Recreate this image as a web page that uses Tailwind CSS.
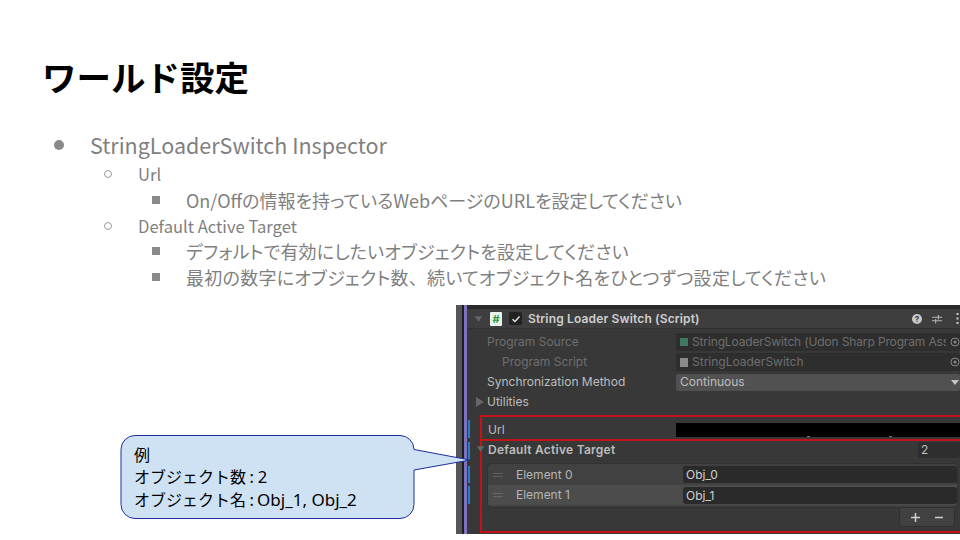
<!DOCTYPE html>
<html lang="ja"><head><meta charset="utf-8">
<script src="https://cdn.jsdelivr.net/npm/@tailwindcss/browser@4"></script>
</head>
<body class="m-0 bg-white">
<div class="relative w-[960px] h-[540px] overflow-hidden bg-white font-['Noto_Sans_CJK_JP','Noto_Sans',sans-serif]">
  <h1 class="absolute left-[42px] top-[52px] m-0 text-[34.5px] leading-[48px] font-bold text-black">ワールド設定</h1>
  <ul class="absolute left-[54px] top-[130px] w-[880px] m-0 p-0 list-none text-[#7f7f7f]">
    <li class="flex items-center h-[30px]"><span class="w-[10px] h-[10px] rounded-full bg-[#8a8a8a] mr-[26px]"></span><span class="text-[21.5px]">StringLoaderSwitch Inspector</span></li>
    <li class="flex items-center h-[28px] pl-[50px] text-[16.6px]"><span class="w-[8px] h-[8px] rounded-full border border-[#999] mr-[26px]"></span><span>Url</span></li>
    <li class="flex items-center h-[24px] pl-[98px] text-[18px] [font-feature-settings:'palt']"><span class="w-[8px] h-[8px] bg-[#8a8a8a] mr-[26px]"></span><span>On/Offの情報を持っているWebページのURLを設定してください</span></li>
    <li class="flex items-center h-[28px] pl-[50px] text-[16.6px]"><span class="w-[8px] h-[8px] rounded-full border border-[#999] mr-[26px]"></span><span>Default Active Target</span></li>
    <li class="flex items-center h-[22px] pl-[98px] text-[18px] tracking-[0.19px] [font-feature-settings:'palt']"><span class="w-[8px] h-[8px] bg-[#8a8a8a] mr-[26px]"></span><span>デフォルトで有効にしたいオブジェクトを設定してください</span></li>
    <li class="flex items-center h-[30px] pl-[98px] text-[18px] tracking-[0.26px] [font-feature-settings:'palt']"><span class="w-[8px] h-[8px] bg-[#8a8a8a] mr-[26px]"></span><span>最初の数字にオブジェクト数<span class="[font-feature-settings:normal]">、</span>続いてオブジェクト名をひとつずつ設定してください</span></li>
  </ul>

  <!-- inspector picture -->
  <div class="absolute left-[456px] top-[305px] w-[504px] h-[229px] flex bg-[#383838] font-['Inter',sans-serif] text-[12px] leading-[20px] text-[#bdbdbd] overflow-hidden">
    <div class="w-[6px] bg-[#55555a]"></div>
    <div class="w-[2px] bg-[#1e1e1e]"></div>
    <div class="w-[3px] bg-[#7d72c0]"></div>
    <div class="flex-1 min-w-0 flex flex-col relative">
      <div class="h-[24px] shrink-0 flex items-center bg-[#3e3e3e] border-t-[4px] border-[#2a2a2a] border-b border-b-[#303030]">
        <svg class="ml-[7px] w-[9px] h-[8px]" viewBox="0 0 11 9"><path d="M1 1h9L5.500 8z" fill="#666"/></svg>
        <span class="ml-[7px] w-[12px] h-[14px] bg-[#e8f2ea] text-[#2f9a50] text-[11px] leading-[14px] font-bold text-center rounded-[1px]">#</span>
        <span class="ml-[7px] w-[13px] h-[13px] bg-[#222] rounded-[2px] flex items-center justify-center"><svg class="w-[10px] h-[10px]" viewBox="0 0 10 10"><path d="M1.500 5.200 4 7.500 8.500 2.500" stroke="#e0e0e0" stroke-width="1.500" fill="none"/></svg></span>
        <span class="ml-[6px] font-semibold text-[12px] text-[#cfcfcf] tracking-[0.15px]">String Loader Switch (Script)</span>
        <div class="ml-auto flex items-center">
          <span class="w-[10px] h-[10px] rounded-full bg-[#c8c8c8] text-[#333] text-[8px] leading-[10px] font-bold text-center">?</span>
          <svg class="ml-[10px] w-[10px] h-[10px]" viewBox="0 0 11 11"><path d="M0 3.500h11M0 7.500h11M7 1v5M4 5.500v5" stroke="#b5b5b5" stroke-width="1.200" fill="none"/></svg>
          <svg class="ml-[14px] mr-[1px] w-[3px] h-[11px]" viewBox="0 0 3 11"><path d="M0.500 0h2v2h-2zM0.500 4.500h2v2h-2zM0.500 9h2v2h-2z" fill="#ccc"/></svg>
        </div>
      </div>
      <div class="mt-[3px] h-[20px] shrink-0 flex items-center text-[#6e6e6e]">
        <span class="pl-[20px] w-[209px] shrink-0">Program Source</span>
        <div class="flex-1 min-w-0 h-[18px] flex items-center bg-[#2e2e2e] rounded-[2px] pl-[4px] overflow-hidden">
          <span class="w-[8px] h-[8px] bg-[#3f7a5f] shrink-0"></span><span class="ml-[4px] whitespace-nowrap overflow-hidden w-[255px] tracking-[-0.14px]">StringLoaderSwitch (Udon Sharp Program Ass</span><svg class="ml-[4px] w-[10px] h-[10px] shrink-0" viewBox="0 0 10 10"><circle cx="5" cy="5" r="4" fill="none" stroke="#888"/><circle cx="5" cy="5" r="1.500" fill="#888"/></svg>
        </div>
      </div>
      <div class="h-[20px] shrink-0 flex items-center text-[#6e6e6e]">
        <span class="pl-[35px] w-[209px] shrink-0">Program Script</span>
        <div class="flex-1 min-w-0 h-[18px] flex items-center bg-[#2e2e2e] rounded-[2px] pl-[4px] overflow-hidden">
          <span class="w-[8px] h-[9px] bg-[#8a8a8a] shrink-0"></span><span class="ml-[4px] whitespace-nowrap w-[255px]">StringLoaderSwitch</span><svg class="ml-[4px] w-[10px] h-[10px] shrink-0" viewBox="0 0 10 10"><circle cx="5" cy="5" r="4" fill="none" stroke="#888"/><circle cx="5" cy="5" r="1.500" fill="#888"/></svg>
        </div>
      </div>
      <div class="h-[20px] shrink-0 flex items-center">
        <span class="pl-[20px] w-[209px] shrink-0">Synchronization Method</span>
        <div class="flex-1 min-w-0 h-[17px] flex items-center justify-between bg-[#515151] rounded-[2px] pl-[4px] pr-[1px]">
          <span>Continuous</span><svg class="w-[8px] h-[5px]" viewBox="0 0 8 5"><path d="M0 0h8L4 5z" fill="#c4c4c4"/></svg>
        </div>
      </div>
      <div class="h-[20px] shrink-0 flex items-center">
        <svg class="ml-[9px] w-[8px] h-[10px]" viewBox="0 0 8 10"><path d="M0 0l8 5-8 5z" fill="#666"/></svg>
        <span class="ml-[3px]">Utilities</span>
      </div>
      <div class="mt-[3px] ml-[13px] h-[118px] shrink-0 flex flex-col border-[2px] border-[#c21418] border-r-0 relative">
        <div class="h-[24px] shrink-0 flex items-center pt-[4px] border-b-[2px] border-[#c21418]">
          <span class="pl-[6px] w-[194px] shrink-0">Url</span>
          <div class="flex-1 h-[14px] bg-black relative">
            <span class="absolute left-[131px] bottom-0 w-[3px] h-[1px] bg-[#777]"></span>
            <span class="absolute left-[213px] bottom-0 w-[3px] h-[1px] bg-[#777]"></span>
          </div>
        </div>
        <div class="h-[18px] shrink-0 flex items-center font-semibold">
          <span class="pl-[6px] w-[436px] shrink-0 tracking-[0.25px]">Default Active Target</span>
          <span class="flex-1 h-[16px] bg-[#2e2e2e] rounded-[2px] pl-[3px] font-normal leading-[16px]">2</span>
        </div>
        <div class="ml-[5px] mr-[2px] mt-[4px] h-[45px] shrink-0 flex flex-col rounded-[4px] bg-[#414141] border border-[#303030]">
          <div class="h-[21px] shrink-0 flex items-center">
            <span class="ml-[5px] w-[10px] h-[4px] border-y border-[#5f5f5f]"></span>
            <span class="ml-[13px] w-[167px] shrink-0 text-[#b5b5b5]">Element 0</span>
            <span class="flex-1 h-[17px] bg-[#2a2a2a] rounded-[3px] pl-[3px] leading-[17px] text-[#d0d0d0]">Obj_0</span>
          </div>
          <div class="h-[20px] shrink-0 flex items-center bg-[#4c4c4c]">
            <span class="ml-[5px] w-[10px] h-[4px] border-y border-[#666]"></span>
            <span class="ml-[13px] w-[167px] shrink-0 text-[#b5b5b5]">Element 1</span>
            <span class="flex-1 h-[17px] bg-[#2a2a2a] rounded-[3px] pl-[3px] leading-[17px] text-[#d0d0d0]">Obj_1</span>
          </div>
        </div>
        <div class="self-end mr-[5px] w-[56px] h-[19px] shrink-0 flex items-center justify-center gap-[15px] bg-[#414141] rounded-b-[3px] border border-t-0 border-[#303030]">
          <svg class="w-[9px] h-[9px]" viewBox="0 0 9 9"><path d="M0 4.500h9M4.500 0v9" stroke="#d0d0d0" stroke-width="1.500"/></svg>
          <svg class="w-[8px] h-[9px]" viewBox="0 0 8 9"><path d="M0 4.500h8" stroke="#d0d0d0" stroke-width="1.500"/></svg>
        </div>
        <!-- foldout arrow lying over the red frame -->
        <svg class="absolute left-[-6px] top-[28px] w-[9px] h-[8px]" viewBox="0 0 11 9"><path d="M1 1h9L5.500 8z" fill="#666"/></svg>
      </div>
    </div>
    <!-- blue change markers -->
    <span class="absolute left-[12px] top-[115px] w-[2px] h-[18px] bg-[#2b7fc4]"></span>
    <span class="absolute left-[12px] top-[137px] w-[2px] h-[18px] bg-[#2b7fc4]"></span>
    <span class="absolute left-[12px] top-[161px] w-[2px] h-[17px] bg-[#2b7fc4]"></span>
    <span class="absolute left-[12px] top-[181px] w-[2px] h-[18px] bg-[#2b7fc4]"></span>
  </div>

  <!-- callout -->
  <svg class="absolute left-0 top-0 w-[960px] h-[540px] pointer-events-none" viewBox="0 0 960 540">
    <path d="M135 435.500H400a14 14 0 0 1 14 14L470 460 414 470v34.500a14 14 0 0 1-14 14H135a14 14 0 0 1-14-14v-55a14 14 0 0 1 14-14z" fill="#cfe2f3" stroke="#1c2f9c" stroke-width="1"/>
  </svg>
  <div class="absolute left-[134px] top-[443px] text-[16px] leading-[22px] text-black">
    <div>例</div>
    <div>オブジェクト数 : <span class="font-['Noto_Sans',sans-serif] text-[16.5px]">2</span></div>
    <div>オブジェクト名 :<span class="ml-[3px] font-['Noto_Sans',sans-serif] text-[17px]">Obj_1, Obj_2</span></div>
  </div>
</div>
</body></html>
